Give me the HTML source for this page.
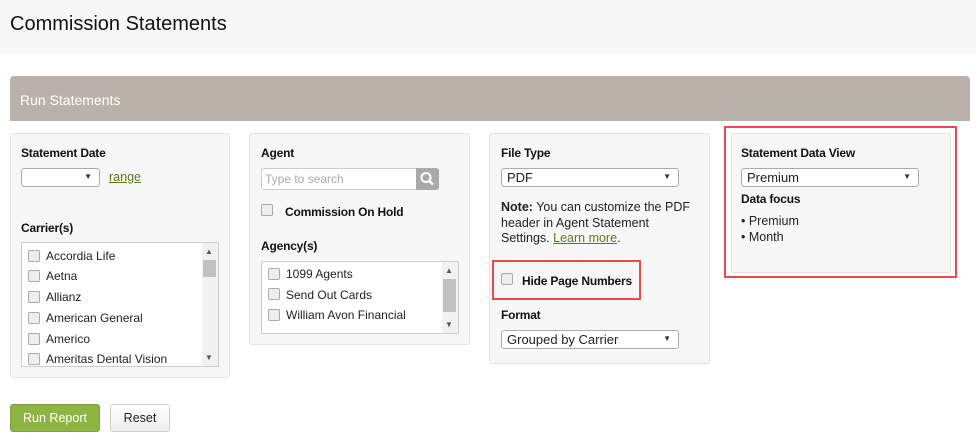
<!DOCTYPE html>
<html><head><meta charset="utf-8"><style>
*{box-sizing:border-box;margin:0;padding:0}
body{width:976px;height:442px;background:#fff;font-family:"Liberation Sans",sans-serif;position:relative;overflow:hidden;color:#222}
.a{position:absolute}
.hdr{left:0;top:0;width:976px;height:54px;background:#f7f7f7}
.ttl{left:10px;top:13px;font-size:20px;color:#111}
.ban{left:10px;top:76px;width:960px;height:45px;background:#bab2aa;border-radius:4px 4px 0 0;color:#fff;font-size:14px;padding:16px 0 0 10px}
.pn{background:#f7f7f7;border:1px solid #e3e3e3;border-radius:3px}
.lb{font-size:12px;font-weight:bold;color:#111;letter-spacing:-0.2px}
.sel{background:#fff;border:1px solid #aaa;border-radius:3px;height:19px;font-size:13px;padding:1px 0 0 5px;color:#222}
.sel:after{content:"\25BC";position:absolute;right:7px;top:3px;font-size:8px;color:#333}
.list{background:#fff;border:1px solid #ccc}
.it{position:absolute;font-size:12px;color:#222}
.cb{position:absolute;width:12px;height:12px;border:1px solid #aaa;border-radius:2px;background:#eee}
.sb{position:absolute;top:0;bottom:0;right:0;width:16px;background:#f1f1f1}
.th{position:absolute;left:1px;width:13px;background:#c1c1c1}
.ar{position:absolute;left:3px;font-size:8px;color:#555}
.red{border:2px solid #e84b4b}
.tx{font-size:12.5px;color:#222}
</style></head><body>
<div class="a hdr"></div>
<div class="a ttl">Commission Statements</div>
<div class="a ban">Run Statements</div>

<div class="a pn" style="left:10px;top:133px;width:220px;height:245px"></div>
<div class="a lb" style="left:21px;top:146px">Statement Date</div>
<div class="a sel" style="left:21px;top:168px;width:79px"></div>
<div class="a tx" style="left:109px;top:170px;color:#5b7a1e;text-decoration:underline">range</div>
<div class="a lb" style="left:21px;top:221px">Carrier(s)</div>
<div class="a list" style="left:21px;top:242px;width:198px;height:125px">
 <div class="sb"><div class="ar" style="top:4px">&#9650;</div><div class="th" style="top:17px;height:17px"></div><div class="ar" style="bottom:4px">&#9660;</div></div>
 <div class="cb" style="left:6px;top:7px"></div><div class="it" style="left:24px;top:6px">Accordia Life</div>
 <div class="cb" style="left:6px;top:27px"></div><div class="it" style="left:24px;top:26px">Aetna</div>
 <div class="cb" style="left:6px;top:48px"></div><div class="it" style="left:24px;top:47px">Allianz</div>
 <div class="cb" style="left:6px;top:69px"></div><div class="it" style="left:24px;top:68px">American General</div>
 <div class="cb" style="left:6px;top:90px"></div><div class="it" style="left:24px;top:89px">Americo</div>
 <div class="cb" style="left:6px;top:110px"></div><div class="it" style="left:24px;top:109px">Ameritas Dental Vision</div>
</div>

<div class="a pn" style="left:249px;top:133px;width:221px;height:212px"></div>
<div class="a lb" style="left:261px;top:146px">Agent</div>
<div class="a" style="left:261px;top:168px;width:178px;height:22px;background:#fff;border:1px solid #ccc;border-radius:3px;font-size:12px;color:#aaa;padding:3px 0 0 3px">Type to search</div>
<div class="a" style="left:416px;top:168px;width:23px;height:22px;background:#a9a9a9;border-radius:0 3px 3px 0">
<svg width="23" height="22"><circle cx="10" cy="9.5" r="4.5" fill="none" stroke="#fff" stroke-width="2"/><line x1="13.5" y1="13" x2="17" y2="16.5" stroke="#fff" stroke-width="2.5"/></svg></div>
<div class="cb" style="left:261px;top:204px"></div>
<div class="a lb" style="left:285px;top:205px">Commission On Hold</div>
<div class="a lb" style="left:261px;top:239px">Agency(s)</div>
<div class="a list" style="left:261px;top:261px;width:198px;height:73px">
 <div class="sb"><div class="ar" style="top:4px">&#9650;</div><div class="th" style="top:17px;height:33px"></div><div class="ar" style="bottom:4px">&#9660;</div></div>
 <div class="cb" style="left:6px;top:6px"></div><div class="it" style="left:24px;top:5px">1099 Agents</div>
 <div class="cb" style="left:6px;top:26px"></div><div class="it" style="left:24px;top:26px">Send Out Cards</div>
 <div class="cb" style="left:6px;top:47px"></div><div class="it" style="left:24px;top:46px">William Avon Financial</div>
</div>

<div class="a pn" style="left:489px;top:133px;width:221px;height:231px"></div>
<div class="a lb" style="left:501px;top:146px">File Type</div>
<div class="a sel" style="left:501px;top:168px;width:178px">PDF</div>
<div class="a tx" style="left:501px;top:200px;line-height:15.5px;width:200px"><b>Note:</b> You can customize the PDF header in Agent Statement Settings. <span style="color:#5b7a1e;text-decoration:underline">Learn more</span>.</div>
<div class="a red" style="left:492px;top:260px;width:149px;height:40px"></div>
<div class="cb" style="left:501px;top:273px"></div>
<div class="a lb" style="left:522px;top:274px">Hide Page Numbers</div>
<div class="a lb" style="left:501px;top:308px">Format</div>
<div class="a sel" style="left:501px;top:330px;width:178px">Grouped by Carrier</div>

<div class="a red" style="left:724px;top:126px;width:233px;height:152px"></div>
<div class="a pn" style="left:731px;top:133px;width:220px;height:140px"></div>
<div class="a lb" style="left:741px;top:146px">Statement Data View</div>
<div class="a sel" style="left:741px;top:168px;width:178px">Premium</div>
<div class="a lb" style="left:741px;top:192px">Data focus</div>
<div class="a tx" style="left:741px;top:214px;line-height:15.5px">• Premium<br>• Month</div>

<div class="a" style="left:10px;top:404px;width:90px;height:28px;background:#8db542;border:1px solid #7da33a;border-radius:3px;color:#fff;font-size:12.5px;text-align:center;line-height:26px">Run Report</div>
<div class="a" style="left:110px;top:404px;width:60px;height:28px;background:linear-gradient(#fff,#eee);border:1px solid #ccc;border-radius:3px;color:#222;font-size:12.5px;text-align:center;line-height:26px">Reset</div>
</body></html>
